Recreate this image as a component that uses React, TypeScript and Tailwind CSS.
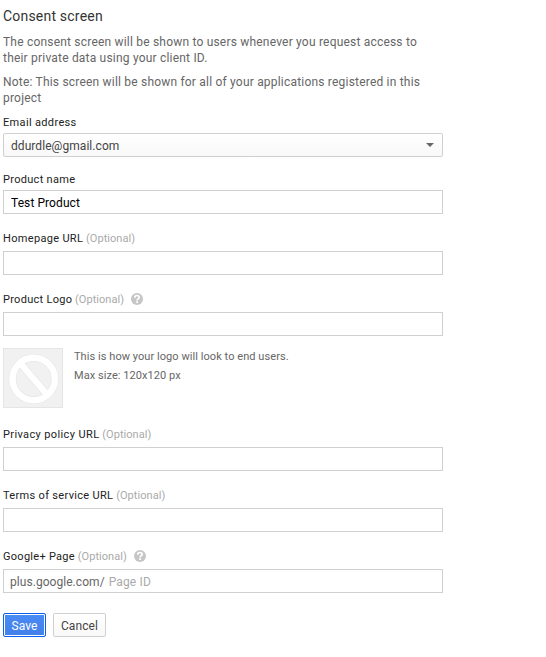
import type { ReactNode } from "react";

function HelpIcon() {
  return (
    <svg className="mb-[2px] ml-[7px] h-3 w-3" viewBox="0 0 12 12" aria-label="Help">
      <circle cx="6" cy="6" r="6" fill="#c6c6c6" />
      <path d="M3.8 4.7C3.8 1.8 8.2 1.9 8.2 4.4C8.2 5.9 6.1 5.8 6.1 7.5" fill="none" stroke="#fff" strokeWidth="1.7" />
      <path d="M5.2 8.3h1.8v1.6H5.2z" fill="#fff" />
    </svg>
  );
}

type LabelProps = { children: ReactNode; optional?: boolean; help?: boolean; className?: string };

function Label({ children, optional, help, className = "mb-1 tracking-[0.32px]" }: LabelProps) {
  return (
    <div className={`flex h-4 items-center text-[11px] leading-4 whitespace-pre text-[#222] ${className}`}>
      <span>{children}</span>
      {optional && <span className="tracking-[0.05px] text-[#aaa]"> (Optional)</span>}
      {help && <HelpIcon />}
    </div>
  );
}

function Input({ value = "", label }: { value?: string; label: string }) {
  return (
    <input
      aria-label={label}
      defaultValue={value}
      className="block h-6 w-[440px] border border-[#d0d0d0] bg-white px-[7px] pt-[2px] text-[12px] tracking-[0.08px] text-black outline-none"
    />
  );
}

export default function App() {
  return (
    <main className="h-[657px] w-[546px] bg-white pt-[6px] pl-[3px] font-[Roboto,sans-serif] text-[12px] text-[#666]">
      <h1 className="mb-2 text-[14px] leading-5 tracking-[0.2px] text-[#333]">Consent screen</h1>
      <p className="mb-2 leading-4 tracking-[0.2px]">
        The consent screen will be shown to users whenever you request access to
        <br />
        their private data using your client ID.
      </p>
      <p className="mb-[9px] leading-4 tracking-[0.2px]">
        Note: This screen will be shown for all of your applications registered in this
        <br />
        project
      </p>

      <section className="mb-[15px]">
        <Label className="mb-[2px] tracking-[0.34px]">Email address</Label>
        <button className="flex h-6 w-[440px] items-center justify-between rounded-[2px] border border-[#d0d0d0] bg-gradient-to-b from-white to-[#f8f8f8] pr-2 pl-[7px] text-[#444]">
          <span className="pt-[2px] tracking-[0.06px]">ddurdle@gmail.com</span>
          <svg className="h-1 w-2" viewBox="0 0 8 4">
            <path d="M0 0h8L4 4z" fill="#666" />
          </svg>
        </button>
      </section>

      <section className="mb-[17px]">
        <Label className="mb-[2px] tracking-[0.3px]">Product name</Label>
        <Input label="Product name" value="Test Product" />
      </section>

      <section className="mb-[17px]">
        <Label optional>Homepage URL</Label>
        <Input label="Homepage URL" />
      </section>

      <section className="mb-[19px]">
        <Label optional help className="mb-1 tracking-[0.28px]">Product Logo</Label>
        <Input label="Product Logo" />
        <div className="mt-3 flex">
          <div className="h-[60px] w-[60px] border border-[#e5e5e5] bg-[#f1f1f1]">
            <svg className="h-[58px] w-[58px]" viewBox="0 0 58 58" fill="none">
              <circle cx="29.7" cy="30" r="21.2" stroke="#e7e7e7" strokeWidth="7.7" />
              <path d="M16.5 14.5L43 45.5" stroke="#e7e7e7" strokeWidth="7.7" />
              <circle cx="29.7" cy="30" r="21.2" stroke="#fff" strokeWidth="6.5" />
              <path d="M16.5 14.5L43 45.5" stroke="#fff" strokeWidth="6.5" />
            </svg>
          </div>
          <div className="ml-[11px] pt-px text-[11px] tracking-[0.06px]">
            <p className="mb-[3px] leading-4">This is how your logo will look to end users.</p>
            <p className="leading-4">Max size: 120x120 px</p>
          </div>
        </div>
      </section>

      <section className="mb-[17px]">
        <Label optional className="mb-1 tracking-[0.38px]">Privacy policy URL</Label>
        <Input label="Privacy policy URL" />
      </section>

      <section className="mb-[17px]">
        <Label optional>Terms of service URL</Label>
        <Input label="Terms of service URL" />
      </section>

      <section className="mb-5">
        <Label optional help className="mb-1 tracking-[0.28px]">Google+ Page</Label>
        <div className="flex h-6 w-[440px] items-center border border-[#d0d0d0] pt-[2px] pl-[6px]">
          <span className="tracking-[0.05px]">plus.google.com/</span>
          <input aria-label="Page ID" placeholder="Page ID" className="ml-1 flex-1 tracking-[0.15px] outline-none placeholder:text-[#aaa]" />
        </div>
      </section>

      <div className="flex gap-[7px]">
        <button className="h-6 w-[43px] rounded-[2px] border border-[#0b5fee] bg-gradient-to-b from-[#4a8bf5] to-[#4380e8] pt-[2px] tracking-[0.1px] text-white shadow-[inset_0_0_0_1px_#fff]">Save</button>
        <button className="h-6 w-[53px] rounded-[2px] border border-[#d0d0d0] bg-gradient-to-b from-white to-[#f8f8f8] pt-[2px] tracking-[0.1px] text-[#444]">Cancel</button>
      </div>
    </main>
  );
}
